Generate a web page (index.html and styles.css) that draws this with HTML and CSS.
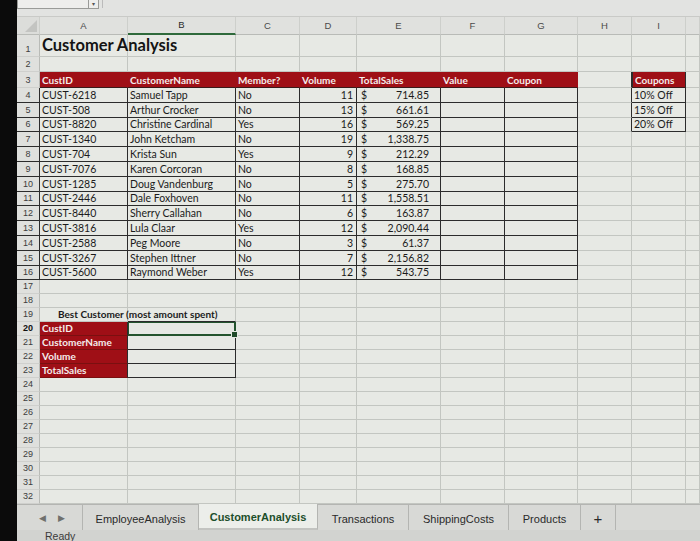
FILE: index.html
```html
<!DOCTYPE html>
<html>
<head>
<meta charset="utf-8">
<link rel="stylesheet" href="styles.css">
</head>
<body>
<div class="bezel"></div>
<div class="main">
  <div class="topbar">
    <div class="namebox"><span class="nb-field"></span><span class="nb-drop">▾</span></div>
    <div class="formula"></div>
  </div>
  <table class="sheet">
    <colgroup>
      <col class="c-rn"><col class="c-a"><col class="c-b"><col class="c-c"><col class="c-d"><col class="c-e"><col class="c-f"><col class="c-g"><col class="c-h"><col class="c-i"><col class="c-j">
    </colgroup>
    <tr class="hdr"><td class="corner"><span class="tri"></span></td><td>A</td><td class="selcol">B</td><td>C</td><td>D</td><td>E</td><td>F</td><td>G</td><td>H</td><td>I</td><td></td></tr>
    <tr class="r1"><td class="rn">1</td><td class="title">Customer Analysis</td><td></td><td></td><td></td><td></td><td></td><td></td><td></td><td></td><td></td></tr>
    <tr class="r2"><td class="rn">2</td><td></td><td></td><td></td><td></td><td></td><td></td><td></td><td></td><td></td><td></td></tr>
    <tr class="r3"><td class="rn">3</td><td class="th">CustID</td><td class="th">CustomerName</td><td class="th">Member?</td><td class="th">Volume</td><td class="th">TotalSales</td><td class="th">Value</td><td class="th">Coupon</td><td class="pre-cp"></td><td class="th cp-h">Coupons</td><td></td></tr>
    <tr class="r"><td class="rn dk">4</td><td class="dk">CUST-6218</td><td class="dk">Samuel Tapp</td><td class="dk">No</td><td class="dk num">11</td><td class="dk acc"><span>$</span><span>714.85</span></td><td class="dk"></td><td class="dk"></td><td class="pre-cp"></td><td class="dk">10% Off</td><td></td></tr>
    <tr class="r"><td class="rn dk">5</td><td class="dk">CUST-508</td><td class="dk">Arthur Crocker</td><td class="dk">No</td><td class="dk num">13</td><td class="dk acc"><span>$</span><span>661.61</span></td><td class="dk"></td><td class="dk"></td><td class="pre-cp"></td><td class="dk">15% Off</td><td></td></tr>
    <tr class="r"><td class="rn dk">6</td><td class="dk">CUST-8820</td><td class="dk">Christine Cardinal</td><td class="dk">Yes</td><td class="dk num">16</td><td class="dk acc"><span>$</span><span>569.25</span></td><td class="dk"></td><td class="dk"></td><td class="pre-cp"></td><td class="dk">20% Off</td><td></td></tr>
    <tr class="r"><td class="rn dk">7</td><td class="dk">CUST-1340</td><td class="dk">John Ketcham</td><td class="dk">No</td><td class="dk num">19</td><td class="dk acc"><span>$</span><span>1,338.75</span></td><td class="dk"></td><td class="dk"></td><td></td><td></td><td></td></tr>
    <tr class="r"><td class="rn dk">8</td><td class="dk">CUST-704</td><td class="dk">Krista Sun</td><td class="dk">Yes</td><td class="dk num">9</td><td class="dk acc"><span>$</span><span>212.29</span></td><td class="dk"></td><td class="dk"></td><td></td><td></td><td></td></tr>
    <tr class="r"><td class="rn dk">9</td><td class="dk">CUST-7076</td><td class="dk">Karen Corcoran</td><td class="dk">No</td><td class="dk num">8</td><td class="dk acc"><span>$</span><span>168.85</span></td><td class="dk"></td><td class="dk"></td><td></td><td></td><td></td></tr>
    <tr class="r"><td class="rn dk">10</td><td class="dk">CUST-1285</td><td class="dk">Doug Vandenburg</td><td class="dk">No</td><td class="dk num">5</td><td class="dk acc"><span>$</span><span>275.70</span></td><td class="dk"></td><td class="dk"></td><td></td><td></td><td></td></tr>
    <tr class="r"><td class="rn dk">11</td><td class="dk">CUST-2446</td><td class="dk">Dale Foxhoven</td><td class="dk">No</td><td class="dk num">11</td><td class="dk acc"><span>$</span><span>1,558.51</span></td><td class="dk"></td><td class="dk"></td><td></td><td></td><td></td></tr>
    <tr class="r"><td class="rn dk">12</td><td class="dk">CUST-8440</td><td class="dk">Sherry Callahan</td><td class="dk">No</td><td class="dk num">6</td><td class="dk acc"><span>$</span><span>163.87</span></td><td class="dk"></td><td class="dk"></td><td></td><td></td><td></td></tr>
    <tr class="r"><td class="rn dk">13</td><td class="dk">CUST-3816</td><td class="dk">Lula Claar</td><td class="dk">Yes</td><td class="dk num">12</td><td class="dk acc"><span>$</span><span>2,090.44</span></td><td class="dk"></td><td class="dk"></td><td></td><td></td><td></td></tr>
    <tr class="r"><td class="rn dk">14</td><td class="dk">CUST-2588</td><td class="dk">Peg Moore</td><td class="dk">No</td><td class="dk num">3</td><td class="dk acc"><span>$</span><span>61.37</span></td><td class="dk"></td><td class="dk"></td><td></td><td></td><td></td></tr>
    <tr class="r"><td class="rn dk">15</td><td class="dk">CUST-3267</td><td class="dk">Stephen Ittner</td><td class="dk">No</td><td class="dk num">7</td><td class="dk acc"><span>$</span><span>2,156.82</span></td><td class="dk"></td><td class="dk"></td><td></td><td></td><td></td></tr>
    <tr class="r"><td class="rn dk">16</td><td class="dk">CUST-5600</td><td class="dk">Raymond Weber</td><td class="dk">Yes</td><td class="dk num">12</td><td class="dk acc"><span>$</span><span>543.75</span></td><td class="dk"></td><td class="dk"></td><td></td><td></td><td></td></tr>
    <tr class="s"><td class="rn">17</td><td></td><td></td><td></td><td></td><td></td><td></td><td></td><td></td><td></td><td></td></tr>
    <tr class="s"><td class="rn">18</td><td></td><td></td><td></td><td></td><td></td><td></td><td></td><td></td><td></td><td></td></tr>
    <tr class="s"><td class="rn">19</td><td class="best">Best Customer (most amount spent)</td><td class="sel-top"></td><td></td><td></td><td></td><td></td><td></td><td></td><td></td><td></td></tr>
    <tr class="s"><td class="rn rsel">20</td><td class="th side">CustID</td><td class="dk selcell"></td><td></td><td></td><td></td><td></td><td></td><td></td><td></td><td></td></tr>
    <tr class="s"><td class="rn">21</td><td class="th side">CustomerName</td><td class="dk"></td><td></td><td></td><td></td><td></td><td></td><td></td><td></td><td></td></tr>
    <tr class="s"><td class="rn">22</td><td class="th side">Volume</td><td class="dk"></td><td></td><td></td><td></td><td></td><td></td><td></td><td></td><td></td></tr>
    <tr class="s"><td class="rn">23</td><td class="th side">TotalSales</td><td class="dk"></td><td></td><td></td><td></td><td></td><td></td><td></td><td></td><td></td></tr>
    <tr class="s"><td class="rn">24</td><td></td><td></td><td></td><td></td><td></td><td></td><td></td><td></td><td></td><td></td></tr>
    <tr class="s"><td class="rn">25</td><td></td><td></td><td></td><td></td><td></td><td></td><td></td><td></td><td></td><td></td></tr>
    <tr class="s"><td class="rn">26</td><td></td><td></td><td></td><td></td><td></td><td></td><td></td><td></td><td></td><td></td></tr>
    <tr class="s"><td class="rn">27</td><td></td><td></td><td></td><td></td><td></td><td></td><td></td><td></td><td></td><td></td></tr>
    <tr class="s"><td class="rn">28</td><td></td><td></td><td></td><td></td><td></td><td></td><td></td><td></td><td></td><td></td></tr>
    <tr class="s"><td class="rn">29</td><td></td><td></td><td></td><td></td><td></td><td></td><td></td><td></td><td></td><td></td></tr>
    <tr class="s"><td class="rn">30</td><td></td><td></td><td></td><td></td><td></td><td></td><td></td><td></td><td></td><td></td></tr>
    <tr class="s"><td class="rn">31</td><td></td><td></td><td></td><td></td><td></td><td></td><td></td><td></td><td></td><td></td></tr>
    <tr class="s"><td class="rn">32</td><td></td><td></td><td></td><td></td><td></td><td></td><td></td><td></td><td></td><td></td></tr>
  </table>
  <div class="tabbar">
    <div class="arrows"><span class="arr">◀</span><span class="arr">▶</span></div>
    <div class="tab">EmployeeAnalysis</div>
    <div class="tab active">CustomerAnalysis</div>
    <div class="tab">Transactions</div>
    <div class="tab">ShippingCosts</div>
    <div class="tab">Products</div>
    <div class="tab plus">+</div>
  </div>
  <div class="status">Ready</div>
</div>
</body>
</html>
```

FILE: styles.css
```css
html, body {
  margin: 0;
  padding: 0;
  height: 541px;
  overflow: hidden;
  background: #dfe0dd;
}
body {
  display: flex;
  font-family: "Lato", "Open Sans", sans-serif;
  color: #1b1b1b;
}
.bezel {
  width: 17px;
  flex: none;
  background: #0b0b0b;
}
.main {
  flex: 1;
  display: flex;
  flex-direction: column;
  min-width: 0;
}
.topbar {
  height: 17px;
  flex: none;
  display: flex;
  align-items: flex-start;
  background: #e2e3e1;
  border-bottom: 1px solid #c9cac7;
  box-sizing: border-box;
}
.namebox {
  width: 80px;
  height: 8px;
  display: flex;
  border: 1px solid #9a9b98;
  border-top: none;
  background: #eeeeec;
}
.nb-field { flex: 1; border-right: 1px solid #9a9b98; }
.nb-drop { width: 9px; font-size: 6px; line-height: 7px; text-align: center; color: #555; }
.formula {
  margin-left: 3px;
  width: 10px;
  height: 8px;
  border-left: 1px solid #bbb;
}

.sheet {
  border-collapse: separate;
  border-spacing: 0;
  table-layout: fixed;
  width: 683px;
  flex: none;
}
.c-rn { width: 23px; }
.c-a { width: 88px; }
.c-b { width: 108px; }
.c-c { width: 64px; }
.c-d { width: 57px; }
.c-e { width: 84px; }
.c-f { width: 64px; }
.c-g { width: 73px; }
.c-h { width: 54px; }
.c-i { width: 54px; }
.c-j { width: 14px; }

.sheet td {
  border-right: 1px solid #c3c6c1;
  border-bottom: 1px solid #c3c6c1;
  padding: 0 2px 1px 2px;
  font-size: 10.5px;
  line-height: 11px;
  white-space: nowrap;
  overflow: visible;
  vertical-align: bottom;
  background: #e7e9e4;
}
.hdr { height: 18px; }
.r1 { height: 22px; }
.r2 { height: 15px; }
.r3 { height: 16px; }
.r { height: 14.8px; }
.s { height: 14px; }

.sheet .hdr td {
  background: #e0e1de;
  font-family: "Liberation Sans", Arial, sans-serif;
  font-size: 9.5px;
  color: #4a4a4a;
  text-align: center;
  vertical-align: middle;
  border-bottom: 1px solid #b9bbb7;
  border-right: 1px solid #cdcfcb;
}
.sheet .hdr td.selcol {
  border-bottom: 2px solid #2f6a3b;
  color: #2a2a2a;
}
.sheet .hdr td.corner {
  position: relative;
  background: #dcddda;
}
.tri {
  position: absolute;
  right: 2px;
  bottom: 2px;
  width: 0;
  height: 0;
  border-left: 12px solid transparent;
  border-bottom: 12px solid #c3c4c1;
}
.sheet td.rn {
  background: #dfe0dd;
  font-family: "Liberation Sans", Arial, sans-serif;
  font-size: 9px;
  color: #3c3c3c;
  text-align: center;
  padding: 0 0 1px 0;
  border-right: 1px solid #b9bbb7;
  border-bottom: 1px solid #cfd0cd;
}
.sheet td.rn.dk { border-right: 1px solid #2c2c2c; }
.sheet td.rn.rsel { color: #111; font-weight: bold; }

.sheet td.title {
  font-size: 16.5px;
  font-weight: bold;
  line-height: 19px;
  padding-bottom: 1px;
  color: #141414;
}
.sheet td.th {
  background: #9f0f16;
  color: #f4eceb;
  font-weight: bold;
  font-size: 10px;
  border-right: 1px solid #9f0f16;
  border-bottom: 1px solid #3a1a1a;
}
.sheet td.cp-h {
  border-left: 1px solid #2c2c2c;
  border-right: 1px solid #2c2c2c;
}
.sheet td.pre-cp { border-right: 1px solid #2c2c2c; }
.sheet td.dk {
  border-right: 1px solid #2c2c2c;
  border-bottom: 1px solid #2c2c2c;
}
.sheet td.num { text-align: right; padding-right: 3px; }
.sheet td.acc span:first-child { float: left; padding-left: 2px; }
.sheet td.acc span:last-child { float: right; padding-right: 9px; }
.sheet td.acc::after { content: ""; display: block; clear: both; }

.sheet td.best {
  font-weight: bold;
  font-size: 10px;
  padding-left: 18px;
}
.sheet td.sel-top { border-bottom: 1px solid #2c2c2c; }
.sheet td.side {
  border-right: 1px solid #2c2c2c;
  border-bottom: 1px solid #7a1010;
}
.sheet td.selcell {
  position: relative;
  box-shadow: inset 0 0 0 1px #24542e;
  border-right: 1px solid #24542e;
  border-bottom: 1px solid #24542e;
}
.sheet td.selcell::after {
  content: "";
  position: absolute;
  right: -3px;
  bottom: -3px;
  width: 5px;
  height: 5px;
  background: #1f4a29;
  border: 1px solid #e6e8e3;
}

.tabbar {
  height: 26px;
  flex: none;
  display: flex;
  align-items: stretch;
  background: #d8d9d6;
  border-top: 1px solid #b4b5b2;
  font-family: "Liberation Sans", Arial, sans-serif;
  font-size: 11px;
  color: #2a2a2a;
  box-sizing: border-box;
}
.arrows {
  width: 61px;
  display: flex;
  align-items: center;
  justify-content: center;
  gap: 12px;
  padding-left: 4px;
  border-right: 1px solid #b4b5b2;
}
.arr { font-size: 9px; color: #6f706d; }
.tab {
  display: flex;
  align-items: center;
  justify-content: center;
  border-right: 1px solid #b4b5b2;
  padding-top: 2px;
}
.tab:nth-child(2) { width: 115px; }
.tab.active {
  width: 118px;
  background: #eceeea;
  color: #1d4f2a;
  font-weight: bold;
  margin-top: -1px;
  border-bottom: 2px solid #c3c4c1;
}
.tab:nth-child(4) { width: 90px; }
.tab:nth-child(5) { width: 99px; }
.tab:nth-child(6) { width: 71px; }
.tab.plus { width: 34px; font-size: 15px; }
.status {
  flex: 1;
  background: #d2d3d0;
  font-family: "Liberation Sans", Arial, sans-serif;
  font-size: 10.5px;
  color: #3a3a3a;
  padding-left: 28px;
  line-height: 12px;
}
```
